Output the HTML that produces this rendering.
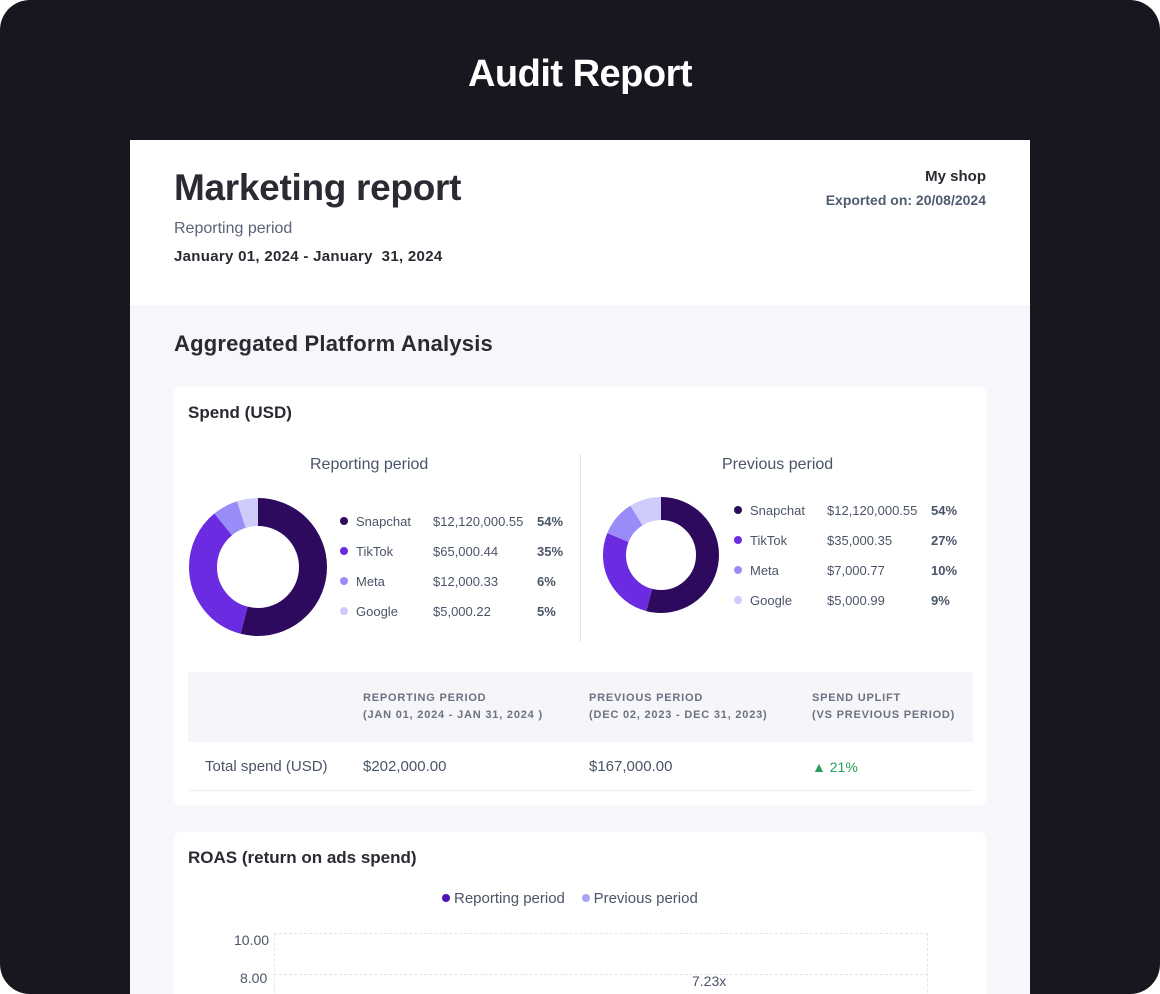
<!DOCTYPE html>
<html><head><meta charset="utf-8"><style>
*{margin:0;padding:0;box-sizing:border-box}
html,body{width:1160px;height:994px;overflow:hidden}
body{background:#fff;font-family:"Liberation Sans",sans-serif;position:relative}
.frame{position:absolute;left:0;top:0;width:1160px;height:994px;background:#17171f;border-radius:30px;overflow:hidden}
.t{position:absolute;white-space:nowrap}
.page{position:absolute;left:130px;top:140px;width:900px;height:854px;background:#f7f7fb;overflow:hidden}
.head{position:absolute;left:0;top:0;width:900px;height:165px;background:#fff}
.card{position:absolute;background:#fff;border-radius:6px;left:44px;width:812px}
.dot{display:inline-block;width:8px;height:8px;border-radius:50%;margin-right:8px;vertical-align:1px}
.leg{position:absolute;font-size:13px;color:#4a5568}
.leg div{height:30px;position:relative}
.leg span{position:absolute}
.th{font-size:11px;color:#6b7280;letter-spacing:.8px;line-height:17px;font-weight:bold}
</style></head><body>
<div class="frame">
<div class="t" style="left:0;width:1160px;text-align:center;top:53px;font-size:38px;font-weight:bold;color:#fff;letter-spacing:-0.5px">Audit Report</div>
<div class="page">
 <div class="head">
  <div class="t" style="left:44px;top:27px;font-size:37px;color:#2a2a33;font-weight:bold;letter-spacing:-0.3px">Marketing report</div>
  <div class="t" style="left:44px;top:80px;font-size:16px;color:#5a6478">Reporting period</div>
  <div class="t" style="left:44px;top:108px;font-size:15px;font-weight:bold;color:#2a2a33;letter-spacing:0.3px">January 01, 2024 - January&nbsp; 31, 2024</div>
  <div class="t" style="right:44px;top:28px;font-size:15px;font-weight:bold;color:#2a2a33">My shop</div>
  <div class="t" style="right:44px;top:52px;font-size:14px;font-weight:bold;color:#4f5b70">Exported on: 20/08/2024</div>
 </div>
 <div class="t" style="left:44px;top:191px;font-size:22px;font-weight:bold;color:#2a2a33;letter-spacing:0.2px">Aggregated Platform Analysis</div>
 <div class="card" style="top:247px;height:418px">
  <div class="t" style="left:14px;top:16px;font-size:17px;font-weight:bold;color:#2a2a33">Spend (USD)</div>
  <div class="t" style="left:136px;top:69px;font-size:16px;color:#4a5568">Reporting period</div>
  <div class="t" style="left:548px;top:69px;font-size:16px;color:#4a5568">Previous period</div>
  <div style="position:absolute;left:406px;top:67px;width:1px;height:188px;background:#e2e4ea"></div>
  <svg style="position:absolute;left:14px;top:110px" width="140" height="140" viewBox="0 0 140 140">
   <g transform="rotate(-90 70 70)" fill="none" stroke-width="28">
    <circle cx="70" cy="70" r="55" stroke="#2d0a5e" stroke-dasharray="186.6 400"/>
    <circle cx="70" cy="70" r="55" stroke="#6b2be0" stroke-dasharray="0 186.6 121 400"/>
    <circle cx="70" cy="70" r="55" stroke="#9a8cf8" stroke-dasharray="0 307.6 20.7 400"/>
    <circle cx="70" cy="70" r="55" stroke="#cfcbfb" stroke-dasharray="0 328.3 17.3 400"/>
   </g></svg>
  <svg style="position:absolute;left:428px;top:109px" width="118" height="118" viewBox="0 0 118 118">
   <g transform="rotate(-90 59 59)" fill="none" stroke-width="23">
    <circle cx="59" cy="59" r="46.5" stroke="#2d0a5e" stroke-dasharray="157.8 400"/>
    <circle cx="59" cy="59" r="46.5" stroke="#6b2be0" stroke-dasharray="0 157.8 78.9 400"/>
    <circle cx="59" cy="59" r="46.5" stroke="#9a8cf8" stroke-dasharray="0 236.7 29.2 400"/>
    <circle cx="59" cy="59" r="46.5" stroke="#cfcbfb" stroke-dasharray="0 265.9 26.3 400"/>
   </g></svg>
  <div class="leg" style="left:166px;top:127px;width:240px">
   <div><span style="left:0"><i class="dot" style="background:#2d0a5e"></i>Snapchat</span><span style="left:93px">$12,120,000.55</span><span style="left:197px;font-weight:bold">54%</span></div>
   <div><span style="left:0"><i class="dot" style="background:#6b2be0"></i>TikTok</span><span style="left:93px">$65,000.44</span><span style="left:197px;font-weight:bold">35%</span></div>
   <div><span style="left:0"><i class="dot" style="background:#9a8cf8"></i>Meta</span><span style="left:93px">$12,000.33</span><span style="left:197px;font-weight:bold">6%</span></div>
   <div><span style="left:0"><i class="dot" style="background:#cfcbfb"></i>Google</span><span style="left:93px">$5,000.22</span><span style="left:197px;font-weight:bold">5%</span></div>
  </div>
  <div class="leg" style="left:560px;top:116px;width:240px">
   <div><span style="left:0"><i class="dot" style="background:#2d0a5e"></i>Snapchat</span><span style="left:93px">$12,120,000.55</span><span style="left:197px;font-weight:bold">54%</span></div>
   <div><span style="left:0"><i class="dot" style="background:#6b2be0"></i>TikTok</span><span style="left:93px">$35,000.35</span><span style="left:197px;font-weight:bold">27%</span></div>
   <div><span style="left:0"><i class="dot" style="background:#9a8cf8"></i>Meta</span><span style="left:93px">$7,000.77</span><span style="left:197px;font-weight:bold">10%</span></div>
   <div><span style="left:0"><i class="dot" style="background:#cfcbfb"></i>Google</span><span style="left:93px">$5,000.99</span><span style="left:197px;font-weight:bold">9%</span></div>
  </div>
  <div style="position:absolute;left:14px;top:285px;width:785px;height:70px;background:#f5f5fa"></div>
  <div class="t th" style="left:189px;top:303px">REPORTING PERIOD<br>(JAN 01, 2024 - JAN 31, 2024 )</div>
  <div class="t th" style="left:415px;top:303px">PREVIOUS PERIOD<br>(DEC 02, 2023 - DEC 31, 2023)</div>
  <div class="t th" style="left:638px;top:303px">SPEND UPLIFT<br>(VS PREVIOUS PERIOD)</div>
  <div class="t" style="left:31px;top:371px;font-size:15px;color:#4a5568">Total spend (USD)</div>
  <div class="t" style="left:189px;top:371px;font-size:15px;color:#4a5568">$202,000.00</div>
  <div class="t" style="left:415px;top:371px;font-size:15px;color:#4a5568">$167,000.00</div>
  <div class="t" style="left:638px;top:372px;font-size:14px;color:#27a05a">▲ 21%</div>
  <div style="position:absolute;left:14px;top:403px;width:785px;height:1px;background:#eceef2"></div>
 </div>
 <div class="card" style="top:692px;height:200px">
  <div class="t" style="left:14px;top:16px;font-size:17px;font-weight:bold;color:#2a2a33">ROAS (return on ads spend)</div>
  <div class="t" style="left:268px;top:58px;font-size:15px;color:#4a5568"><i class="dot" style="background:#4b13b8;margin-right:4px"></i>Reporting period &nbsp;&nbsp; <i class="dot" style="background:#a9a3f8;margin-right:4px"></i>Previous period</div>
  <div class="t" style="left:60px;top:100px;font-size:14px;color:#4a5568">10.00</div>
  <div class="t" style="left:66px;top:138px;font-size:14px;color:#4a5568">8.00</div>
  <div style="position:absolute;left:100px;top:101px;width:654px;height:99px;border:1px dashed #e2e4ee;border-bottom:none"></div>
  <div style="position:absolute;left:100px;top:142px;width:654px;border-top:1px dashed #e2e4ee"></div>
  <div class="t" style="left:518px;top:141px;font-size:14px;color:#4a5568">7.23x</div>
 </div>
</div>
</div>
</body></html>
